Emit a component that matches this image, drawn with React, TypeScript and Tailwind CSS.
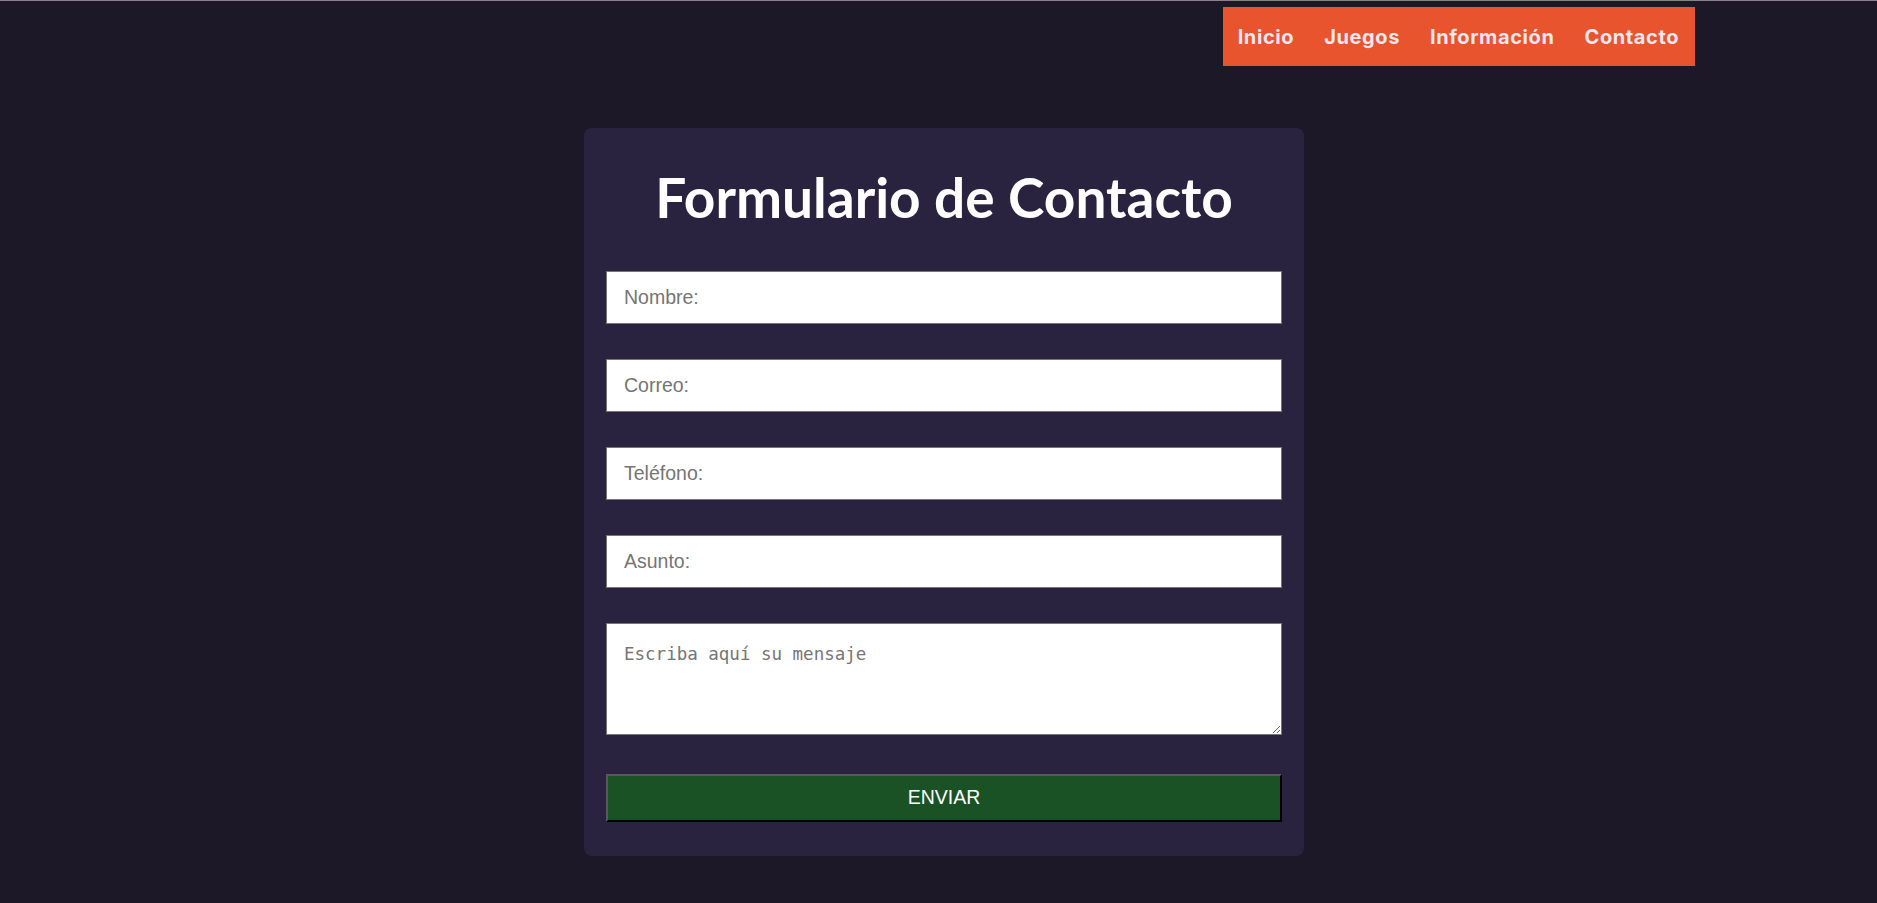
import { useState } from "react";

const links = ["Inicio", "Juegos", "Información", "Contacto"];

const fields = [
    { name: "nombre", placeholder: "Nombre:", type: "text" },
    { name: "correo", placeholder: "Correo:", type: "email" },
    { name: "telefono", placeholder: "Teléfono:", type: "tel" },
    { name: "asunto", placeholder: "Asunto:", type: "text" },
];

const App = () => {
    const [mensaje, setMensaje] = useState("");

    return (
        <div className="min-h-screen bg-[#1c1827] border-t border-[#8a818c]">
            <header className="flex justify-end pt-[6px] pr-[182px]">
                <nav className="flex h-[59px] items-center gap-[30px] bg-[#e8542d] pl-[15px] pr-[16px]">
                    {links.map((link) => (
                        <a key={link} href="#"
                            className="text-[20px] font-bold text-[#f2e6ef] tracking-[0.6px]"
                            style={{ fontFamily: "Inter, 'Open Sans', sans-serif" }}>
                            {link}
                        </a>
                    ))}
                </nav>
            </header>

            <main className="flex justify-center pl-[11px] pt-[62px]">
                <form className="w-[720px] rounded-lg bg-[#2a2340] px-[22px] pt-[38px] pb-[34px]"
                    onSubmit={(e) => e.preventDefault()}>
                    <h1 className="text-center text-[55px] font-bold leading-[62px] text-white"
                        style={{ fontFamily: "Lato, sans-serif" }}>
                        Formulario de Contacto
                    </h1>

                    <div className="mt-[43px] flex flex-col gap-[35px]">
                        {fields.map((field) => (
                            <input key={field.name}
                                type={field.type}
                                name={field.name}
                                placeholder={field.placeholder}
                                className="h-[53px] w-full border border-[#767676] bg-white px-[17px] text-[19.5px] text-black placeholder:text-[#757575] outline-none"
                                style={{ fontFamily: "'Liberation Sans', Arial, sans-serif" }}
                            />
                        ))}

                        <textarea
                            name="mensaje"
                            placeholder="Escriba aquí su mensaje"
                            value={mensaje}
                            onChange={(e) => setMensaje(e.target.value)}
                            className="block h-[112px] w-full border border-[#767676] bg-white px-[17px] pt-[17px] pb-[10px] text-[17.5px] text-black placeholder:text-[#757575] outline-none"
                            style={{ fontFamily: "'DejaVu Sans Mono', monospace" }}
                        />
                    </div>

                    <button type="submit"
                        className="mt-[39px] h-[48px] w-full border-2 border-t-[#5a5560] border-l-[#5a5560] border-b-black border-r-black bg-[#1a5226] text-[19.5px] text-white"
                        style={{ fontFamily: "'Liberation Sans', Arial, sans-serif" }}>
                        ENVIAR
                    </button>
                </form>
            </main>
        </div>
    );
};

export default App;
